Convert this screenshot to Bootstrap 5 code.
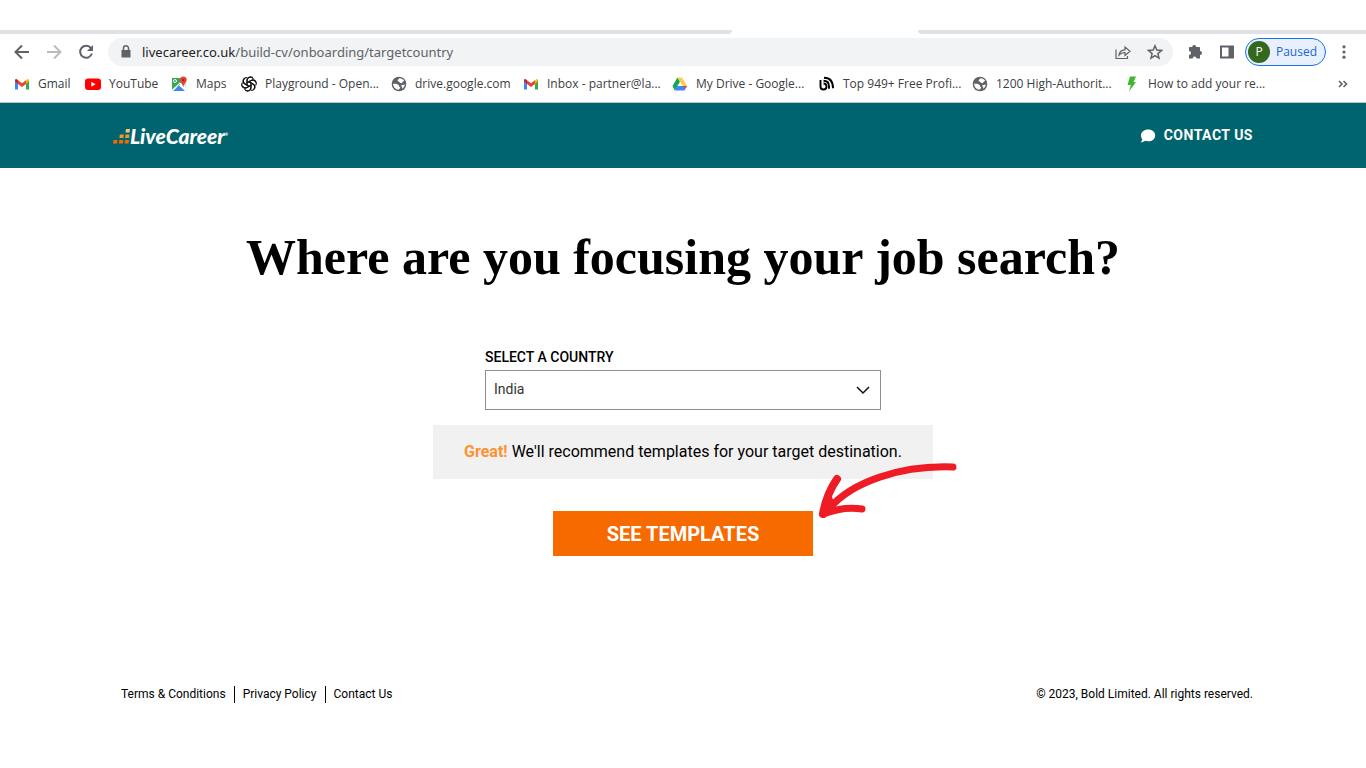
<!DOCTYPE html>
<html lang="en">
<head>
<meta charset="utf-8">
<meta name="viewport" content="width=device-width, initial-scale=1">
<title>LiveCareer - Target country</title>
<link href="https://cdn.jsdelivr.net/npm/bootstrap@5.3.0/dist/css/bootstrap.min.css" rel="stylesheet">
<style>
  body { font-family: Roboto, "Liberation Sans", sans-serif; color: #000; background: #fff; }
  svg { display: block; flex: none; }
  .browser { font-family: "Open Sans", "Noto Sans", sans-serif; color: #3c4043; padding-top: 30px; border-bottom: 1px solid #b9c5c9; }
  .tab-strip { height: 4px; gap: 186px; }
  .tab-strip span { background: #dee1e6; }
  .strip-left { flex: 732 1 0; border-bottom-right-radius: 6px; }
  .strip-right { flex: 448 1 0; border-bottom-left-radius: 6px; }
  .toolbar { height: 36px; padding: 0 14px 0 13px; }
  .history { gap: 14px; }
  .tool { border: 0; background: none; padding: 0; color: #5f6368; }
  .address { height: 28px; background: #f1f3f4; border-radius: 14px; padding: 0 10px; margin: 0 14px 0 13px; }
  .url { font: 13px/20px "Noto Sans", sans-serif; color: #5f6368; white-space: nowrap; outline: 0; }
  .url b { font-weight: 400; color: #202124; }
  .profile { height: 28px; width: 81px; border: 1px solid #1a73e8; border-radius: 14px; background: #e8f0fe; color: #1967d2; font-size: 12px; padding: 0 8px 0 2px; margin: 0 10px; }
  .avatar { width: 22px; height: 22px; border-radius: 50%; background: #33691e; color: #fff; }
  .bookmarks { display: grid; grid-template-columns: 71px 87px 69px 150px 132px 149px 147px 153px 152px 1fr auto; height: 32px; padding: 0 17px 4px 14px; }
  .bookmarks a { font-size: 12px; line-height: 16px; color: #3c4043; gap: 8px; white-space: nowrap; }
  .site-header { background: #00646e; height: 65px; }
  .page-width { max-width: 1140px; margin-left: auto; margin-right: auto; }
  .brand { color: #fff; font: italic 900 21px/24px Lato, sans-serif; }
  .brand sup { font-size: 4px; top: -8px; }
  .contact { color: #fff; font-size: 14px; font-weight: 700; letter-spacing: 0.5px; gap: 8px; }
  .title { font: 700 50px/60px "Liberation Serif", serif; margin: 59px 0 0; }
  .country { width: 396px; margin-top: 60px; }
  .country label { font-size: 14px; line-height: 20px; font-weight: 500; margin-bottom: 3px; }
  .country .form-select { height: 40px; border: 1px solid #8f8f8f; border-radius: 0; font-size: 14px; color: #333; padding: 0 36px 2px 8px;
    background-image: url("data:image/svg+xml,%3csvg xmlns='http://www.w3.org/2000/svg' viewBox='0 0 14 14'%3e%3cpath fill='none' stroke='%23111' stroke-width='1.5' d='M1 4l6 6 6-6'/%3e%3c/svg%3e"); background-size: 14px; background-position: right 10px center; }
  .notice { width: 500px; height: 54px; margin-top: 15px; background: #f1f1f1; font-size: 16px; }
  .notice strong { color: #ff9232; }
  .cta { margin-top: 32px; }
  .cta .btn { width: 260px; height: 45px; border: 0; border-radius: 0; background: #f66a00; color: #fff; font-size: 20px; font-weight: 700; padding: 0; }
  .pointer { position: absolute; left: 264px; top: -50px; }
  .site-footer { font-size: 12px; line-height: 17px; margin-top: 130px; padding-bottom: 65px; }
  .site-footer a { color: #000; padding: 0 8px; }
  .site-footer a + a { border-left: 1px solid #000; }
</style>
</head>
<body>
<svg width="0" height="0" class="position-absolute" aria-hidden="true">
  <symbol id="gmail" viewBox="0 0 16 16"><path fill="#4285f4" d="M1 4v9.500h3V7z"/><path fill="#34a853" d="M12 7v6.500h3V4z"/><path fill="#c5221f" d="M1 3.500V5l3 3V4.200L2.600 3z"/><path fill="#fbbc04" d="M12 4.200V8l3-3V3.800L13.500 3z"/><path fill="#ea4335" d="M4 4.200l4 3 4-3V8l-4 3-4-3z"/></symbol>
  <symbol id="globe" viewBox="0 0 16 16"><circle cx="8" cy="8" r="7.300" fill="#5f6368"/><path fill="#fff" d="M8.500 2.200c2 0 3.700 1 4.700 2.600L11.500 6 10.800 7.200 8.800 6.800 8 5.500 6.500 5.200 7 3.500zM2.100 7.800H5.500L8 9.300v1.500L9.300 11l-.5 1.500L7.500 13.800C4.500 13.600 2.200 11 2.100 7.800zM10 9.200l3.800-.7c-.2 1.700-1 3.200-2.300 4.200L11 11z"/></symbol>
</svg>

<div class="browser">
  <div class="tab-strip d-flex"><span class="strip-left"></span><span class="strip-right"></span></div>
  <div class="toolbar d-flex align-items-center">
    <div class="history d-flex">
      <button class="tool" aria-label="Back"><svg width="18" height="18" viewBox="0 0 18 18" fill="none" stroke="#5f6368" stroke-width="2"><path d="M16 9H3M9 2.500L2.500 9 9 15.500"/></svg></button>
      <button class="tool" aria-label="Forward"><svg width="18" height="18" viewBox="0 0 18 18" fill="none" stroke="#babcbe" stroke-width="2"><path d="M2 9h13M9 2.500L15.500 9 9 15.500"/></svg></button>
      <button class="tool" aria-label="Reload"><svg width="18" height="18" viewBox="0 0 18 18"><path fill="none" stroke="#5f6368" stroke-width="2" d="M14 5.200A6 6 0 1 0 14.900 10.500"/><path fill="#5f6368" d="M16 2v6h-6z"/></svg></button>
    </div>
    <div class="address d-flex align-items-center flex-grow-1">
      <svg width="16" height="16" viewBox="0 0 16 16"><path fill="#5f6368" d="M3.500 6h9v7.500h-9z"/><path fill="none" stroke="#5f6368" stroke-width="1.500" d="M5.500 6.500V4.300a2.500 2.500 0 0 1 5 0v2.200"/></svg>
      <div class="url flex-grow-1 ps-2" role="textbox" contenteditable="true" spellcheck="false" aria-label="Address"><b>livecareer.co.uk</b>/build-cv/onboarding/targetcountry</div>
      <button class="tool me-3" aria-label="Share"><svg width="16" height="16" viewBox="0 0 16 16" fill="none" stroke="#5f6368" stroke-width="1.200"><path d="M1 5.500v9h11.500v-2.500M4 11c.5-3.500 2.500-5 6-5.200V3l5 4.200-5 4.200V8.700C7 8.500 5.500 9.300 4 11z"/></svg></button>
      <button class="tool" aria-label="Bookmark"><svg width="16" height="16" viewBox="0 0 16 16" fill="none" stroke="#5f6368" stroke-width="1.500"><path d="M8 1.800l1.800 4.300 4.700.4-3.600 3.100 1.100 4.600L8 11.700l-4 2.500 1.100-4.600-3.600-3.100 4.700-.4z"/></svg></button>
    </div>
    <div class="d-flex align-items-center gap-3">
      <button class="tool" aria-label="Extensions"><svg width="16" height="16" viewBox="0 0 16 16" fill="#5f6368"><path d="M5.200 3a2 2 0 0 1 4 0H12c.6 0 1 .4 1 1v3a2 2 0 0 1 0 4v3.500H9.500a1.900 1.900 0 0 0-3.800 0H2V11a2 2 0 0 0 0-4V4c0-.6.400-1 1-1z"/></svg></button>
      <button class="tool" aria-label="Side panel"><svg width="16" height="16" viewBox="0 0 16 16"><path fill="#5f6368" fill-rule="evenodd" d="M1 1.500h14v13H1zM3 3.500v9h6.500v-9z"/></svg></button>
    </div>
    <button class="profile d-flex align-items-center justify-content-between"><span class="avatar d-flex align-items-center justify-content-center">P</span>Paused</button>
    <button class="tool" aria-label="Menu"><svg width="16" height="16" viewBox="0 0 16 16" fill="#5f6368"><circle cx="8" cy="2.800" r="1.600"/><circle cx="8" cy="8" r="1.600"/><circle cx="8" cy="13.200" r="1.600"/></svg></button>
  </div>
  <nav class="bookmarks align-items-center" aria-label="Bookmarks">
    <a href="#" class="d-flex text-decoration-none"><svg width="16" height="16"><use href="#gmail"/></svg>Gmail</a>
    <a href="#" class="d-flex text-decoration-none"><svg width="16" height="16" viewBox="0 0 16 16"><rect y="2.500" width="16" height="11.500" rx="3" fill="#f00"/><path fill="#fff" d="M6.300 5.800v5l4.200-2.500z"/></svg>YouTube</a>
    <a href="#" class="d-flex text-decoration-none"><svg width="16" height="16" viewBox="0 0 16 16"><path fill="#34a853" d="M0 2h10v5L0 15z"/><path fill="#e3e3e3" d="M10 7l4 5V5z"/><path fill="#4285f4" d="M1 15l6-5.500 6 5.500z"/><path stroke="#fff" stroke-width="1.200" d="M0 14.500L8 7l6 6.500" fill="none"/><circle cx="3" cy="5" r="1.500" fill="none" stroke="#fff" stroke-width=".9"/><path fill="#ea4335" d="M11.300.5A3.400 3.400 0 0 1 14.700 4c0 2.500-2.400 3-3.400 7-1-4-3.400-4.500-3.400-7A3.400 3.400 0 0 1 11.300.5z"/><circle cx="11.300" cy="4" r="1.300" fill="#96281f"/></svg>Maps</a>
    <a href="#" class="d-flex text-decoration-none"><svg width="16" height="16" viewBox="0 0 16 16" fill="none" stroke="#111" stroke-width="1.100"><path id="petal" d="M6 9.200V4.400C6 .2 11 -.2 12.400 3M6 6.800l3.900-2.200c2.200-1.200 4.600.2 5 2"/><use href="#petal" transform="rotate(60 8 8)"/><use href="#petal" transform="rotate(120 8 8)"/><use href="#petal" transform="rotate(180 8 8)"/><use href="#petal" transform="rotate(240 8 8)"/><use href="#petal" transform="rotate(300 8 8)"/></svg>Playground - Open...</a>
    <a href="#" class="d-flex text-decoration-none"><svg width="16" height="16"><use href="#globe"/></svg>drive.google.com</a>
    <a href="#" class="d-flex text-decoration-none"><svg width="16" height="16"><use href="#gmail"/></svg>Inbox - partner@la...</a>
    <a href="#" class="d-flex text-decoration-none"><svg width="16" height="16" viewBox="0 0 16 16"><path fill="#11a65c" d="M5.500 1.500L.5 10l2.200 4.500L8 5.700z"/><path fill="#ffcf48" d="M5.500 1.500h4.500L15 10h-4.500z"/><path fill="#4285f4" d="M5.200 10H15l-2.500 4.500H2.700z"/><path fill="#ea4335" d="M10.700 10H15l-1.200 2.200z"/></svg>My Drive - Google...</a>
    <a href="#" class="d-flex text-decoration-none"><svg width="16" height="16" viewBox="0 0 16 16" fill="none" stroke="#000" stroke-width="1.900"><path d="M1.500 4v6.500a3 3 0 1 0 3-3M4.500 4.800c3.500 0 5.500 2 5.500 5.500v2.500M5 1.800c5.500 0 9 3.500 9 10.500"/></svg>Top 949+ Free Profi...</a>
    <a href="#" class="d-flex text-decoration-none"><svg width="16" height="16"><use href="#globe"/></svg>1200 High-Authorit...</a>
    <a href="#" class="d-flex text-decoration-none"><svg width="16" height="16" viewBox="0 0 16 16"><path fill="#3fb92c" d="M6 .5h6L9.500 6H12L5 15.500 6.800 9H3.500z"/></svg>How to add your re...</a>
    <button class="tool" aria-label="More bookmarks"><svg width="12" height="16" viewBox="0 0 12 16" fill="none" stroke="#5f6368" stroke-width="1.600"><path d="M2 5l3 3-3 3M6.500 5l3 3-3 3"/></svg></button>
  </nav>
</div>

<header class="site-header d-flex align-items-center">
  <div class="page-width w-100 d-flex align-items-center justify-content-between">
    <a href="#" class="brand d-flex align-items-center text-decoration-none">
      <svg width="17" height="16" viewBox="0 0 17 16"><g fill="#f66a00"><path d="M.5 12h4l-.4 3.500H0zM6.300 12h4l-.4 3.500h-4zM12 12h4l-.4 3.500h-4z"/></g><path fill="#f8942a" d="M6.800 6.500h4l-.4 3.500h-4zM12.500 6.500h4l-.4 3.500h-4z"/><path fill="#f7c56e" d="M13 1h4l-.4 3.500h-4z"/></svg>
      <span>LiveCareer<sup>®</sup></span>
    </a>
    <a href="#" class="contact d-flex align-items-center text-decoration-none">
      <svg width="16" height="14" viewBox="0 0 16 14"><path fill="#fff" d="M8.200.5c4 0 7 2.500 7 5.900s-3 5.900-7 5.900c-1 0-2-.2-2.900-.5-1.200.9-2.700 1.500-4.600 1.500 1-.9 1.500-2 1.600-3C1.500 9.300 1 7.900 1 6.400 1 3 4.200.5 8.200.5z"/></svg>CONTACT US
    </a>
  </div>
</header>

<main class="d-flex flex-column align-items-center">
  <h1 class="title text-center">Where are you focusing your job search?</h1>
  <div class="country">
    <label for="country" class="d-block">SELECT A COUNTRY</label>
    <select id="country" class="form-select"><option>India</option></select>
  </div>
  <div class="notice d-flex align-items-center justify-content-center"><span><strong>Great!</strong> We'll recommend templates for your target destination.</span></div>
  <div class="cta position-relative">
    <button class="btn">SEE TEMPLATES</button>
    <svg class="pointer" width="144" height="60" viewBox="0 0 144 60" fill="none" stroke="#ee1c25" stroke-width="7" stroke-linecap="round" stroke-linejoin="round"><path d="M136 6C84 4 34 21 12 48"/><path stroke-width="8" d="M20 18C13 28 8 41 6 53"/><path stroke-width="7" d="M6 53c13-5 27-7 39-5"/><path fill="#ee1c25" stroke-width="2" d="M14 36L6 53l12-7z"/></svg>
  </div>
</main>

<footer class="site-footer page-width d-flex justify-content-between">
  <nav class="d-flex" aria-label="Footer"><a href="#" class="text-decoration-none">Terms &amp; Conditions</a><a href="#" class="text-decoration-none">Privacy Policy</a><a href="#" class="text-decoration-none">Contact Us</a></nav>
  <span>© 2023, Bold Limited. All rights reserved.</span>
</footer>
<script src="https://cdn.jsdelivr.net/npm/bootstrap@5.3.0/dist/js/bootstrap.bundle.min.js"></script>
</body>
</html>
